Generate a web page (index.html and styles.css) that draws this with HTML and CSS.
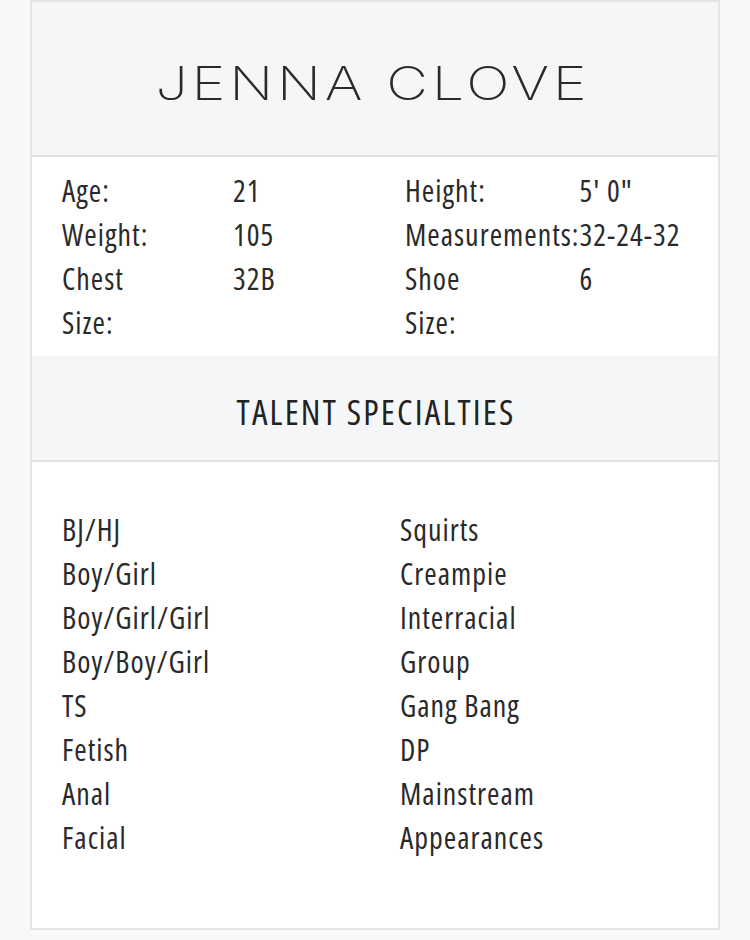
FILE: index.html
```html
<!DOCTYPE html>
<html lang="en">
<head>
<meta charset="utf-8">
<title>Jenna Clove</title>
<link rel="stylesheet" href="styles.css">
</head>
<body>
<main class="card">
  <header class="name-box">
    <h1 class="name">JENNA CLOVE</h1>
  </header>
  <section class="stats">
    <div class="label">Age:</div><div class="value">21</div>
    <div class="label">Height:</div><div class="value">5' 0"</div>
    <div class="label">Weight:</div><div class="value">105</div>
    <div class="label">Measurements:</div><div class="value">32-24-32</div>
    <div class="label">Chest<br>Size:</div><div class="value">32B</div>
    <div class="label">Shoe<br>Size:</div><div class="value">6</div>
  </section>
  <header class="section-head">
    <h2 class="section-title">TALENT SPECIALTIES</h2>
  </header>
  <section class="specialties">
    <ul class="spec-list">
      <li>BJ/HJ</li>
      <li>Boy/Girl</li>
      <li>Boy/Girl/Girl</li>
      <li>Boy/Boy/Girl</li>
      <li>TS</li>
      <li>Fetish</li>
      <li>Anal</li>
      <li>Facial</li>
      <li>Squirts</li>
      <li>Creampie</li>
      <li>Interracial</li>
      <li>Group</li>
      <li>Gang Bang</li>
      <li>DP</li>
      <li>Mainstream</li>
      <li>Appearances</li>
    </ul>
  </section>
</main>
</body>
</html>
```

FILE: styles.css
```css
* { box-sizing: border-box; }

html, body {
  margin: 0;
  padding: 0;
  background: #f8f8f9;
}

body {
  width: 750px;
  height: 940px;
  overflow: hidden;
  font-family: "Open Sans", "DejaVu Sans Condensed", sans-serif;
  font-stretch: 75%;
  font-weight: 400;
  color: #2a2a2a;
}

.card {
  margin: 0 0 0 30px;
  width: 690px;
  height: 930px;
  border: 2px solid #e3e4e6;
  background: #ffffff;
  display: flex;
  flex-direction: column;
}

.name-box {
  height: 155px;
  background: #f5f6f8;
  border-bottom: 2px solid #e1e2e5;
  display: flex;
  align-items: center;
  justify-content: center;
  padding-top: 8px;
  padding-right: 4px;
}

.name {
  margin: 0;
  font-family: Inter, "Noto Sans", sans-serif;
  font-stretch: normal;
  font-weight: 200;
  font-size: 46px;
  letter-spacing: 3px;
  color: #2a2a2a;
  line-height: 1;
  transform: scaleX(1.25);
}

.stats {
  display: grid;
  grid-template-columns: 171px 172px minmax(172px, auto) 1fr;
  padding: 12px 0 11px 30px;
  font-size: 30px;
  letter-spacing: 1px;
  line-height: 44px;
  height: 199px;
}

.label, .value {
  white-space: nowrap;
}

.section-head {
  height: 106px;
  background: #f5f6f8;
  border-bottom: 2px solid #e1e2e5;
  display: flex;
  align-items: center;
  justify-content: center;
  padding-top: 6px;
}

.section-title {
  margin: 0;
  font-weight: 400;
  font-size: 35px;
  letter-spacing: 2.2px;
  margin-right: -2.2px;
  line-height: 1;
  color: #222;
}

.specialties {
  flex: 1;
  padding: 46px 0 0 30px;
}

.spec-list {
  list-style: none;
  margin: 0;
  padding: 0;
  display: grid;
  grid-template-columns: 338px 1fr;
  grid-template-rows: repeat(8, 44px);
  grid-auto-flow: column;
  font-size: 30px;
  letter-spacing: 1px;
  line-height: 44px;
}
```
